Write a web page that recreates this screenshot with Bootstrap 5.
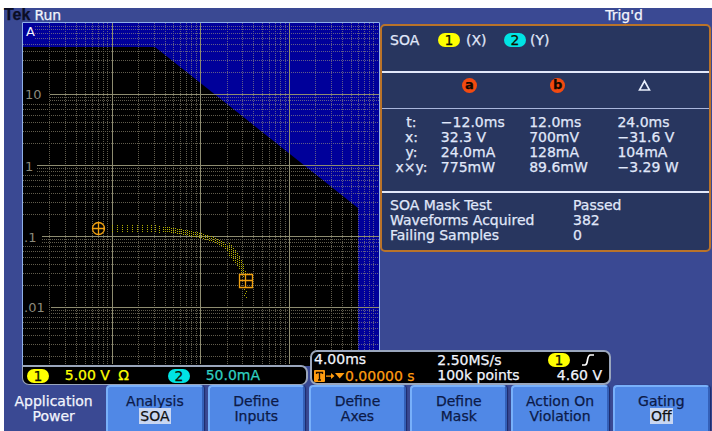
<!DOCTYPE html>
<html lang="en">
<head>
<meta charset="utf-8">
<meta name="viewport" content="width=device-width, initial-scale=1">
<title>Tek – SOA</title>
<link href="https://cdn.jsdelivr.net/npm/bootstrap@5.3.0/dist/css/bootstrap.min.css" rel="stylesheet">
<style>
:root { --edge: #9aa6bc; --chA: #ffff00; --chB: #00e4e4; --cursor: #ff9c10; }
body { background: #fff; padding: 8px 0 0 4px; font: 14px/15px "DejaVu Sans", sans-serif; color: #f2f4fc; -webkit-text-stroke: 0.25px; }
.screen { background: #3a4993; min-height: calc(100vh - 8px); }
.topbar { height: 14px; padding-right: 69px; }
.brand { font: bold 16px/14px "Liberation Sans", sans-serif; color: #0a0d24; margin-right: 4px; }
.stage { display: grid; grid-template-columns: 358fr 332fr; margin-left: 18px; align-items: start; }
.plot { width: 100%; background: #000; }
.plot text { font: 13px "DejaVu Sans", sans-serif; fill: #8c8a7c; }
.plot .plot-name { fill: #f2f4fc; }
.readout { background: #28365f; border: 2px solid #b9732a; border-radius: 5px; margin: 2px 1px 0 0; color: #e0e8fa; }
.sources { height: 47px; padding: 7px 8px 0; border-bottom: 2px solid #e2e8fa; }
.source-name { width: 48px; }
.source-x { width: 44px; padding-left: 6px; }
.pill { display: inline-block; flex: none; width: 22px; height: 14px; border-radius: 7px; line-height: 14px; text-align: center; color: #101000; background: var(--chA); }
.pill-b { background: var(--chB); }
.values { table-layout: fixed; width: 100%; border-bottom: 2px solid #e2e8fa; }
.values th { font-weight: 400; }
.values td, .values th { white-space: nowrap; padding: 0; }
.values thead { border-bottom: 1px solid #aab6dc; }
.values thead th { height: 35px; padding: 5px 0 0 21px; vertical-align: top; }
.values tbody th { text-align: center; }
.values tbody tr:first-child > * { padding-top: 6px; }
.values tbody tr:last-child > * { padding-bottom: 16px; }
.dot { display: block; width: 15px; height: 15px; border-radius: 50%; background: #f24a10; color: #100800; font-size: 13px; font-weight: 700; text-align: center; line-height: 14px; }
.results { display: grid; grid-template-columns: 183fr 136fr; padding: 5px 0 7px 8px; }
.results dt { font-weight: 400; }
.status { margin: -16px 101px 0 18px; display: grid; grid-template-columns: 286fr 303fr; }
.bar { background: #000; border: 2px solid var(--edge); }
.channels { height: 20px; border-width: 2px 2px 1px 1px; border-radius: 0 7px 7px 7px; padding: 0 4px; display: grid; grid-template-columns: 38fr 54fr 50fr 38fr 97fr; align-items: center; white-space: nowrap; }
.timebase { height: 35px; border-radius: 7px; margin-left: 2px; padding: 0 7px 0 2px; display: grid; grid-template-columns: 125fr 167fr; grid-auto-rows: 16px; white-space: nowrap; }
.y { color: var(--chA); } .c { color: #2fd0c0; } .o { color: var(--cursor); }
.menu { display: grid; grid-template-columns: repeat(7, 1fr); column-gap: 4px; padding-right: 2px; margin-left: 1px; height: 46px; }
.menu .btn { --bs-btn-padding-x: 0; --bs-btn-padding-y: 0; font: inherit; color: #0c1a48; background: #5088e6; border: 2px solid #78b0fa; border-bottom: 0; border-right-color: #3460b8; border-radius: 4px 4px 0 0; box-shadow: 1px 0 1px #1c2a6c; white-space: nowrap; }
.menu .title-key { background: transparent; color: #f2f4fc; border-color: transparent; box-shadow: none; }
.pick { background: #c8d6f2; color: #101010; padding: 0 1px; }
</style>
<script src="https://cdn.jsdelivr.net/npm/bootstrap@5.3.0/dist/js/bootstrap.bundle.min.js" defer></script>
</head>
<body>
<div class="screen d-flex flex-column">
  <header class="topbar d-flex align-items-center">
    <span class="brand">Tek</span><span>Run</span><span class="ms-auto">Trig'd</span>
  </header>

  <main class="stage">
    <svg class="plot d-block" viewBox="0 0 358 344" role="img" aria-label="Safe operating area plot">
      <path fill="#00009a" d="M0 0H358V344H336V186L133 25H0Z"/>
      <g shape-rendering="crispEdges" fill="none">
        <path id="minor" stroke="#a09a80" stroke-opacity=".6" stroke-dasharray="1 1"/>
        <path stroke="#8e8c70" d="M90.5 1V342M178.5 1V342M267.5 1V342M28 72.5H357M15 143.5H357M20 214.5H357M29 285.5H357"/>
        <path id="trace" stroke="#b4b000"/>
      </g>
      <text class="plot-name" x="4" y="14">A</text>
      <text x="3" y="77">10</text><text x="3" y="149">1</text><text x="2" y="220">.1</text><text x="2" y="290">.01</text>
      <g fill="none" stroke="#f0a010" stroke-width="1.3">
        <circle cx="76.5" cy="206.5" r="6"/><path d="M70 206.5H83M76.5 200V213"/>
        <path d="M217.5 252.5H230.5V265.5H217.5ZM217.5 258.5H230.5M223.5 252.5V265.5"/>
      </g>
      <path fill="none" stroke="#8fb0e8" d="M.5 344V.5H357.5V344"/>
    </svg>

    <section class="readout">
      <div class="sources d-flex">
        <span class="source-name">SOA</span>
        <span class="pill">1</span><span class="source-x">(X)</span>
        <span class="pill pill-b">2</span><span class="ms-1">(Y)</span>
      </div>
      <table class="values">
        <colgroup><col style="width:18%"><col style="width:27%"><col style="width:27%"><col style="width:28%"></colgroup>
        <thead><tr><td></td><th scope="col"><span class="dot">a</span></th><th scope="col"><span class="dot">b</span></th>
          <th scope="col"><svg class="d-block" width="13" height="14" viewBox="0 0 13 14" role="img" aria-label="Delta"><path d="M6.5 3L11.5 12H1.5Z" fill="none" stroke="#e8eefc" stroke-width="1.6"/></svg></th></tr></thead>
        <tbody>
          <tr><th scope="row">t:</th><td>−12.0ms</td><td>12.0ms</td><td>24.0ms</td></tr>
          <tr><th scope="row">x:</th><td>32.3 V</td><td>700mV</td><td>−31.6 V</td></tr>
          <tr><th scope="row">y:</th><td>24.0mA</td><td>128mA</td><td>104mA</td></tr>
          <tr><th scope="row">x×y:</th><td>775mW</td><td>89.6mW</td><td>−3.29 W</td></tr>
        </tbody>
      </table>
      <dl class="results m-0">
        <dt>SOA Mask Test</dt><dd class="m-0">Passed</dd>
        <dt>Waveforms Acquired</dt><dd class="m-0">382</dd>
        <dt>Failing Samples</dt><dd class="m-0">0</dd>
      </dl>
    </section>
  </main>

  <section class="status align-items-end position-relative">
    <div class="bar channels">
      <span class="pill">1</span><span class="y">5.00 V</span><span class="y">Ω</span>
      <span class="pill pill-b">2</span><span class="c">50.0mA</span>
    </div>
    <div class="bar timebase">
      <span>4.00ms</span>
      <span class="d-flex align-items-center"><span>2.50MS/s</span><span class="pill ms-auto me-2">1</span>
        <svg class="ms-1 me-2" width="12" height="12" viewBox="0 0 12 12" role="img" aria-label="Rising edge"><path d="M0 11H3C5 11 5 9 5.5 6S6.500 1 8.500 1H12" fill="none" stroke="#fff" stroke-width="1.7"/></svg></span>
      <span class="o d-flex align-items-center">
        <svg width="31" height="12" viewBox="0 0 31 12" role="img" aria-label="Trigger position"><rect width="11" height="12" rx="1" fill="#ff9c10"/><path d="M2.500 4V2.500H8.500V4M5.500 2.500V10M4 10H7" fill="none" stroke="#201000" stroke-width="1.300"/><path d="M12 5.500H17V3L20.500 6L17 9V6.800H12ZM21 3H30.500L25.700 8.500Z" fill="#ff9c10"/></svg>
        <span>0.00000 s</span></span>
      <span class="d-flex"><span>100k points</span><span class="ms-auto">4.60 V</span></span>
    </div>
  </section>

  <nav class="menu" aria-label="Application menu">
    <button type="button" class="btn title-key">Application<br>Power</button>
    <button type="button" class="btn">Analysis<br><span class="pick">SOA</span></button>
    <button type="button" class="btn">Define<br>Inputs</button>
    <button type="button" class="btn">Define<br>Axes</button>
    <button type="button" class="btn">Define<br>Mask</button>
    <button type="button" class="btn">Action On<br>Violation</button>
    <button type="button" class="btn">Gating<br><span class="pick">Off</span></button>
  </nav>
</div>
<script>
// Log-log graticule: decades are 88.75 units wide and 71 units high.
let grid = '';
for (let d = 0; d < 5; d++) for (let n = 2; n < 10; n++) {
  const x = Math.floor(1 + 88.75 * (d + Math.log10(n))) + 0.5;
  const y = Math.floor(1 + 71 * (d + 1 - Math.log10(n))) + 0.5;
  if (x < 357) grid += `M${x} 1V343`;
  if (y < 343) {
    const label = [[0, 18, 13], [66, 82, 28], [138, 151, 15], [208, 222, 20], [279, 292, 29]].find(b => y > b[0] && y < b[1]);
    grid += `M${label ? label[2] : 1} ${y}H357`;
  }
}
document.getElementById('minor').setAttribute('d', grid);

// Acquired samples: short dotted columns along the measured curve.
const curve = [[88, 206], [128, 206], [148, 207.5], [163, 210], [178, 213], [188, 216], [198, 220], [208, 228], [216, 238], [221, 248], [224, 258]];
let dots = '';
for (let x = 90; x < 225; x += x < 125 ? 5 : x < 140 ? 4 : 2) {
  const i = curve.findIndex(p => p[0] > x), a = curve[Math.max(i, 1) - 1], b = curve[Math.max(i, 1)];
  const y = Math.round(a[1] + (b[1] - a[1]) * (x - a[0]) / (b[0] - a[0]));
  const h = x > 205 ? 6 : x > 140 ? 2 : 3;
  for (let k = -h; k <= h; k += 2) dots += `M${x} ${y + k + 0.5}h1`;
}
for (let y = 267; y < 276; y += 2) dots += `M${222 + y % 3} ${y + 0.5}h1`;
document.getElementById('trace').setAttribute('d', dots);
</script>
</body>
</html>
